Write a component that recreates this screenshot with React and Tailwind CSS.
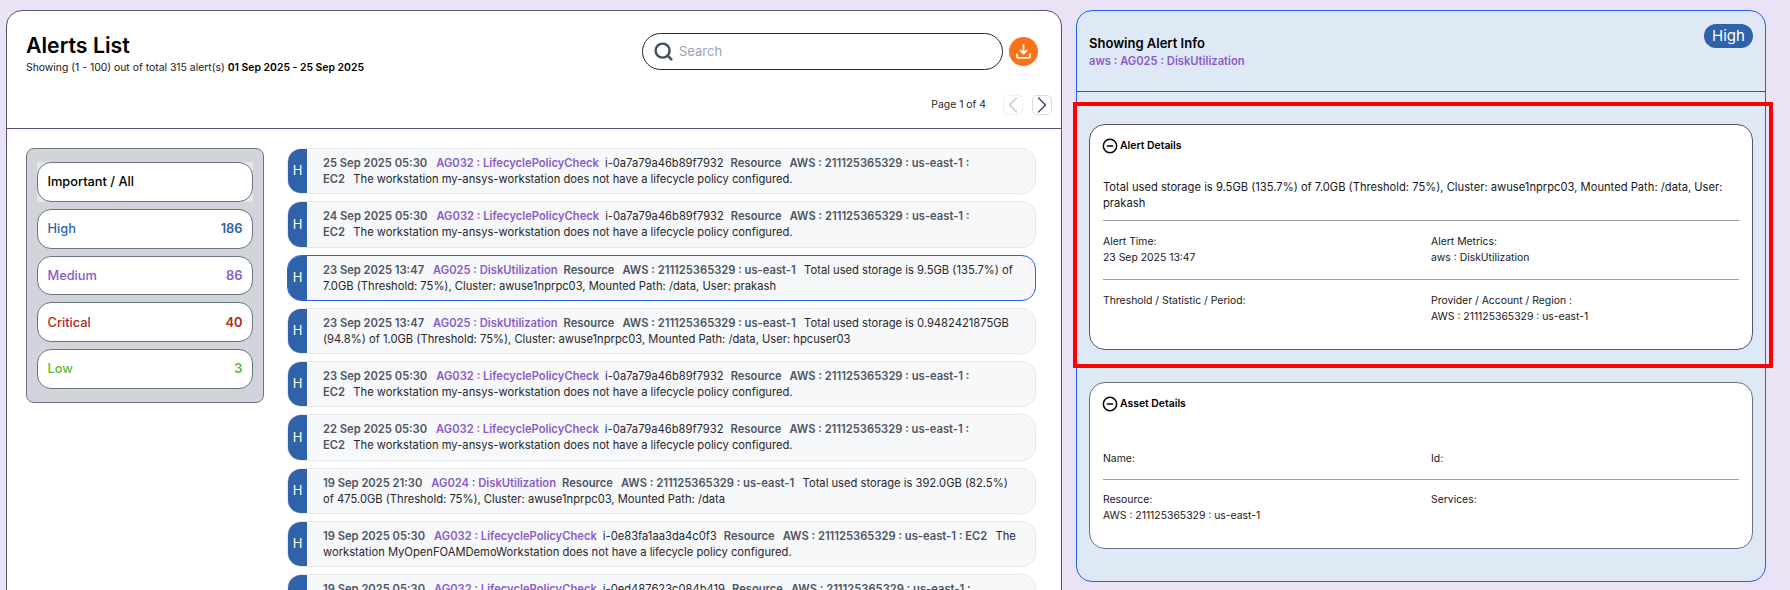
import React from "react";
import { ChevronLeft, ChevronRight, CircleMinus, Search } from "lucide-react";

const filters = [
  { name: "Important / All", count: "", color: "text-black" },
  { name: "High", count: "186", color: "text-[#2f62a8]" },
  { name: "Medium", count: "86", color: "text-[#8a5cc9]" },
  { name: "Critical", count: "40", color: "text-[#b3261e]" },
  { name: "Low", count: "3", color: "text-[#5fb832]" },
];

const lifecycle = "The workstation my-ansys-workstation does not have a lifecycle policy configured.";

const alerts = [
  { time: "25 Sep 2025 05:30", code: "AG032 : LifecyclePolicyCheck", id: "i-0a7a79a46b89f7932", res: "AWS : 211125365329 : us-east-1 : EC2", msg: lifecycle },
  { time: "24 Sep 2025 05:30", code: "AG032 : LifecyclePolicyCheck", id: "i-0a7a79a46b89f7932", res: "AWS : 211125365329 : us-east-1 : EC2", msg: lifecycle },
  { time: "23 Sep 2025 13:47", code: "AG025 : DiskUtilization", res: "AWS : 211125365329 : us-east-1", msg: "Total used storage is 9.5GB (135.7%) of 7.0GB (Threshold: 75%), Cluster: awuse1nprpc03, Mounted Path: /data, User: prakash", active: true },
  { time: "23 Sep 2025 13:47", code: "AG025 : DiskUtilization", res: "AWS : 211125365329 : us-east-1", msg: "Total used storage is 0.9482421875GB (94.8%) of 1.0GB (Threshold: 75%), Cluster: awuse1nprpc03, Mounted Path: /data, User: hpcuser03" },
  { time: "23 Sep 2025 05:30", code: "AG032 : LifecyclePolicyCheck", id: "i-0a7a79a46b89f7932", res: "AWS : 211125365329 : us-east-1 : EC2", msg: lifecycle },
  { time: "22 Sep 2025 05:30", code: "AG032 : LifecyclePolicyCheck", id: "i-0a7a79a46b89f7932", res: "AWS : 211125365329 : us-east-1 : EC2", msg: lifecycle },
  { time: "19 Sep 2025 21:30", code: "AG024 : DiskUtilization", res: "AWS : 211125365329 : us-east-1", msg: "Total used storage is 392.0GB (82.5%) of 475.0GB (Threshold: 75%), Cluster: awuse1nprpc03, Mounted Path: /data" },
  { time: "19 Sep 2025 05:30", code: "AG032 : LifecyclePolicyCheck", id: "i-0e83fa1aa3da4c0f3", res: "AWS : 211125365329 : us-east-1 : EC2", msg: "The workstation MyOpenFOAMDemoWorkstation does not have a lifecycle policy configured." },
  { time: "19 Sep 2025 05:30", code: "AG032 : LifecyclePolicyCheck", id: "i-0ed487623c084b419", res: "AWS : 211125365329 : us-east-1 : EC2", msg: lifecycle },
];

function DownloadIcon() {
  return (
    <svg width="19" height="19" viewBox="0 0 16 16" fill="none" stroke="white" strokeWidth="1.5" strokeLinecap="round" strokeLinejoin="round">
      <path d="M8 2.5v7M5.4 7.2 8 9.7l2.6-2.5" />
      <path d="M2.5 10.2v1.8c0 .8.6 1.4 1.4 1.4h8.2c.8 0 1.4-.6 1.4-1.4v-1.8" />
    </svg>
  );
}

function AlertRow({ alert }) {
  return (
    <div
      className={`flex h-[46.25px] shrink-0 overflow-hidden rounded-[14px] border bg-[#f7f8fa] ${
        alert.active ? "border-[#2563eb]" : "border-[#e5e7eb]"
      }`}
    >
      <div className="flex w-[19px] shrink-0 items-center justify-center bg-[#2f62a8] text-[13px] text-white">H</div>
      <p className="flex-1 self-center pl-[16px] pr-[16px] text-[11.2px] leading-[16px] text-[#27272a]">
        <span className="mr-[9px] font-semibold text-[#4b5563]">{alert.time}</span>
        <span className="mr-[6px] font-semibold text-[#8a5cc9]">{alert.code}</span>
        {alert.id && <span className="mr-[7px]">{alert.id}</span>}
        <span className="mr-[8px] font-semibold text-[#4b5563]">Resource</span>
        <span className="font-semibold text-[#4b5563]">{alert.res}</span>
        {"\u00a0\u00a0"}
        <span className="ml-[2px]">{alert.msg}</span>
      </p>
    </div>
  );
}

function Field({ label, value }) {
  return (
    <div>
      <p>{label}</p>
      {value && <p>{value}</p>}
    </div>
  );
}

function CardTitle({ children }) {
  return (
    <div className="-ml-[1px] flex items-center gap-[2px] text-[10.4px] font-semibold leading-4 text-black">
      <CircleMinus size={16} strokeWidth={2.2} className="shrink-0" />
      {children}
    </div>
  );
}

export default function App() {
  return (
    <div className="flex h-[590px] items-start gap-[14px] overflow-hidden bg-[#e9e3f5] pl-[6px] pt-[10px] font-['Inter',sans-serif]">
      {/* LEFT PANEL */}
      <section className="h-[600px] w-[1056px] shrink-0 rounded-tl-[16px] rounded-tr-[16px] border border-[#5b4f73] bg-white">
        <div className="flex h-[118px] justify-between border-b border-[#5b4f73] pl-[19px] pr-[9px]">
          <div className="pt-[19px]">
            <h1 className="text-[21.3px] font-semibold leading-[30px] text-black">Alerts List</h1>
            <p className="text-[10.4px] leading-4 text-[#18181b]">
              Showing (1 - 100) out of total 315 alert(s) <span className="font-semibold text-black">01 Sep 2025 - 25 Sep 2025</span>
            </p>
          </div>
          <div className="flex flex-col items-end">
            <div className="mr-[14px] mt-[22px] flex items-center gap-[6px]">
              <div className="flex h-[37px] w-[361px] items-center gap-[5px] rounded-full border border-[#27272a] pl-[10px]">
                <Search size={21} strokeWidth={2.8} className="shrink-0 text-[#3f4f5f]" />
                <span className="text-[13px] text-[#94a3b8]">Search</span>
              </div>
              <button className="flex h-[29px] w-[29px] items-center justify-center rounded-full bg-[#f97316]">
                <DownloadIcon />
              </button>
            </div>
            <div className="mt-[25px] flex items-center">
              <span className="mr-[17px] text-[10.4px] text-[#27272a]">Page 1 of 4</span>
              <button className="mr-[9px] flex h-[20px] w-[20px] items-center justify-center rounded-[5px] border border-[#eeeff2] text-[#c4c9d1]">
                <ChevronLeft size={28} strokeWidth={1.2} className="shrink-0" />
              </button>
              <button className="flex h-[20px] w-[20px] items-center justify-center rounded-[5px] border border-[#d9dbe3] text-[#4a3f6b]">
                <ChevronRight size={28} strokeWidth={1.2} className="shrink-0" />
              </button>
            </div>
          </div>
        </div>

        <div className="flex items-start gap-[23px] pl-[19px] pt-[19px]">
          {/* FILTERS */}
          <div className="flex h-[255px] w-[238px] shrink-0 flex-col gap-[7px] rounded-[8px] border border-[#6b7280] bg-[#d1d5db] px-[10px] py-[13px]">
            {filters.map((f, i) => (
              <div key={f.name} className={i === 0 ? "bg-[#e5e7eb]" : ""}>
                <div className={`flex h-[39.8px] items-center justify-between rounded-[14px] border border-[#6b7280] bg-white px-[9.5px] text-[12.8px] font-medium ${f.color}`}>
                  <span>{f.name}</span>
                  <span className="font-semibold">{f.count}</span>
                </div>
              </div>
            ))}
          </div>

          {/* LIST */}
          <div className="flex w-[749px] flex-col gap-[7px]">
            {alerts.map((a, i) => (
              <AlertRow key={i} alert={a} />
            ))}
          </div>
        </div>
      </section>

      {/* RIGHT PANEL */}
      <section className="h-[572px] w-[690px] shrink-0 rounded-[16px] border border-[#2563eb] bg-[#dfe8f5]">
        <div className="flex h-[81px] items-start justify-between border-b border-[#4b5563] pl-[12px] pr-[12px] pt-[13px]">
          <div className="pt-[11px]">
            <h2 className="text-[13px] font-semibold leading-4 text-black">Showing Alert Info</h2>
            <p className="mt-[2px] text-[11.2px] font-semibold leading-4 text-[#8a5cc9]">aws : AG025 : DiskUtilization</p>
          </div>
          <span className="flex h-[24px] w-[49px] items-center justify-center rounded-full bg-[#2f62a8] text-[15px] text-white">High</span>
        </div>

        <div className="flex flex-col gap-[32px] px-[12px] pt-[32px] text-[10.4px] leading-4 text-[#18181b]">
          <div className="relative">
            <div className="h-[226px] rounded-[16px] border border-[#5b4f73] bg-white px-[13px] pt-[13px]">
              <CardTitle>Alert Details</CardTitle>
              <p className="mt-[25px] text-[11.2px]">Total used storage is 9.5GB (135.7%) of 7.0GB (Threshold: 75%), Cluster: awuse1nprpc03, Mounted Path: /data, User: prakash</p>
              <hr className="mt-[9px] border-[#9ca3af]" />
              <div className="mt-[13px] grid grid-cols-[328px_1fr]">
                <Field label="Alert Time:" value="23 Sep 2025 13:47" />
                <Field label="Alert Metrics:" value="aws : DiskUtilization" />
              </div>
              <hr className="mt-[13px] border-[#9ca3af]" />
              <div className="mt-[13px] grid grid-cols-[328px_1fr]">
                <Field label="Threshold / Statistic / Period:" />
                <Field label="Provider / Account / Region :" value="AWS : 211125365329 : us-east-1" />
              </div>
            </div>
            {/* red annotation box */}
            <div className="pointer-events-none absolute -left-[16px] -right-[20px] -top-[22px] -bottom-[18px] border-[4px] border-[#ff0000]" />
          </div>

          <div className="h-[167px] rounded-[16px] border border-[#6b7280] bg-white px-[13px] pt-[13px]">
            <CardTitle>Asset Details</CardTitle>
            <div className="mt-[39px] grid grid-cols-[328px_1fr]">
              <Field label="Name:" />
              <Field label="Id:" />
            </div>
            <hr className="mt-[12px] border-[#9ca3af]" />
            <div className="mt-[12px] grid grid-cols-[328px_1fr]">
              <Field label="Resource:" value="AWS : 211125365329 : us-east-1" />
              <Field label="Services:" />
            </div>
          </div>
        </div>
      </section>
    </div>
  );
}
